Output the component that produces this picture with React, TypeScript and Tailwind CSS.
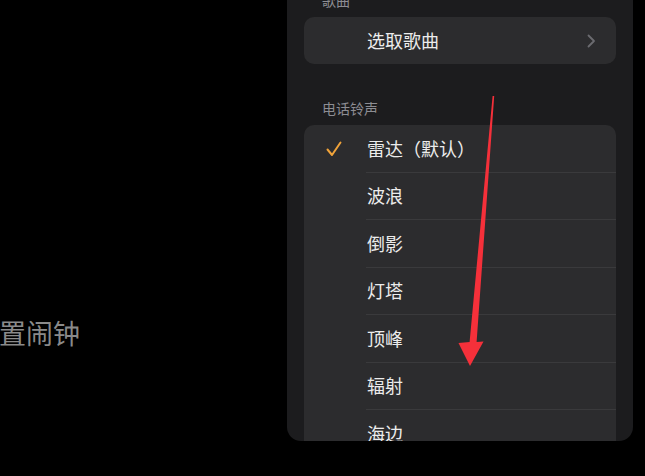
import React from 'react';

const ringtones = ['雷达（默认）', '波浪', '倒影', '灯塔', '顶峰', '辐射', '海边', '山丘'];

const font = { fontFamily: '"Noto Sans CJK SC", "Noto Sans", sans-serif' };

function Check() {
  return (
    <svg width="18" height="18" viewBox="0 0 18 18" fill="none">
      <path d="M2.5 9.5 L7 15 L15.5 2.5" stroke="#f0a33a" strokeWidth="2" strokeLinecap="round" strokeLinejoin="round" />
    </svg>
  );
}

function Chevron() {
  return (
    <svg width="9" height="14" viewBox="0 0 9 14" fill="none">
      <path d="M1.5 1.5 L7 7 L1.5 12.5" stroke="#6b6b70" strokeWidth="1.8" strokeLinecap="round" strokeLinejoin="round" />
    </svg>
  );
}

export default function App() {
  return (
    <div className="relative w-[645px] h-[476px] bg-black overflow-hidden flex" style={font}>
      {/* background page, mostly covered */}
      <div className="w-[287px] shrink-0 flex flex-col">
        <div className="mt-[314px] ml-[-28px] text-[27px] leading-[38px] text-[#8a8a8a] whitespace-nowrap">设置闹钟</div>
      </div>

      {/* sheet */}
      <div className="w-[346px] h-[441px] shrink-0 bg-[#1c1c1e] rounded-b-[14px] overflow-hidden px-[17px] flex flex-col">
        <div className="mt-[-10px] mb-[7px] pl-[18px] text-[14px] leading-[20px] text-[#8d8d93]">歌曲</div>
        <div className="h-[47px] shrink-0 rounded-[10px] bg-[#2c2c2e] flex items-center justify-between pl-[63px] pr-[20px]">
          <span className="text-[18px] text-[#ececec]">选取歌曲</span>
          <Chevron />
        </div>

        <div className="mt-[34px] mb-[7px] pl-[18px] text-[14px] leading-[20px] text-[#8d8d93]">电话铃声</div>
        <div className="flex-1 rounded-t-[10px] bg-[#2c2c2e] flex flex-col overflow-hidden">
          {ringtones.map((name, i) => (
            <div key={name} className="flex shrink-0">
              <div className="w-[62px] shrink-0 flex items-center pl-[21px]">{i === 0 && <Check />}</div>
              <div className="flex-1 h-[47.5px] border-b border-[#3a3a3c] flex items-center pl-[1px] text-[18px] text-[#ececec]">
                {name}
              </div>
            </div>
          ))}
        </div>
      </div>

      {/* red annotation arrow */}
      <svg className="absolute inset-0 pointer-events-none" width="645" height="476" viewBox="0 0 645 476">
        <polygon
          points="492.6,96 494.2,96 476.6,342 483.5,341.5 470,366 458.5,343 469.6,342"
          fill="#f5303a"
        />
      </svg>
    </div>
  );
}
